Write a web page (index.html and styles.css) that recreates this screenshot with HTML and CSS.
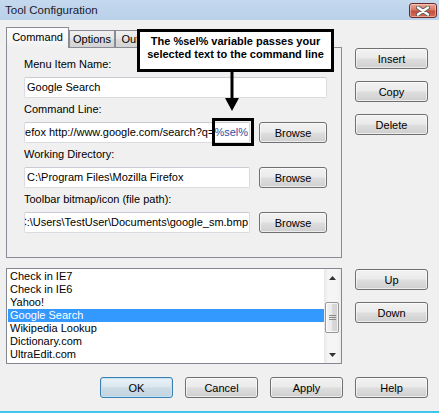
FILE: index.html
```html
<!DOCTYPE html>
<html lang="en">

<head>
    <meta charset="UTF-8">
    <meta name="viewport" content="width=device-width, initial-scale=1.0">
    <title>Tool Configuration</title>
    <link rel="stylesheet" href="styles.css">
</head>

<body>
    <div class="window">
        <!-- title bar -->
        <div class="titlebar">
            <span class="title">Tool Configuration</span>
            <button class="close-btn" aria-label="Close">
                <svg width="14" height="10" viewBox="0 0 14 10">
                    <path d="M2 1.5 L12 8.5 M12 1.5 L2 8.5" stroke="#5a5a5a" stroke-width="4.2" stroke-linecap="round"/>
                    <path d="M2 1.5 L12 8.5 M12 1.5 L2 8.5" stroke="#ffffff" stroke-width="2.4" stroke-linecap="round"/>
                </svg>
            </button>
        </div>

        <div class="client">
            <div class="top-row">
                <!-- tab control -->
                <div class="tabs">
                    <div class="tab-strip">
                        <div class="tab active">Command</div>
                        <div class="tab">Options</div>
                        <div class="tab">Output</div>
                    </div>
                    <div class="tab-page">
                        <div class="field">
                            <label>Menu Item Name:</label>
                            <div class="textbox full">Google Search</div>
                        </div>
                        <div class="field">
                            <label>Command Line:</label>
                            <div class="field-row">
                                <div class="textbox scrolled"><span>C:\Program Files\Mozilla Firefox\firefox http://www.google.com/search?q=<em class="var">%sel%</em></span></div>
                                <button class="btn browse">Browse</button>
                            </div>
                        </div>
                        <div class="field">
                            <label>Working Directory:</label>
                            <div class="field-row">
                                <div class="textbox">C:\Program Files\Mozilla Firefox</div>
                                <button class="btn browse">Browse</button>
                            </div>
                        </div>
                        <div class="field">
                            <label>Toolbar bitmap/icon (file path):</label>
                            <div class="field-row">
                                <div class="textbox scrolled"><span>C:\Users\TestUser\Documents\google_sm.bmp</span></div>
                                <button class="btn browse">Browse</button>
                            </div>
                        </div>
                    </div>
                </div>

                <div class="side-buttons first">
                    <button class="btn">Insert</button>
                    <button class="btn">Copy</button>
                    <button class="btn">Delete</button>
                </div>
            </div>

            <div class="list-row">
                <!-- tool list -->
                <div class="listbox">
                    <ul class="items">
                        <li>Check in IE7</li>
                        <li>Check in IE6</li>
                        <li>Yahoo!</li>
                        <li class="selected">Google Search</li>
                        <li>Wikipedia Lookup</li>
                        <li>Dictionary.com</li>
                        <li>UltraEdit.com</li>
                    </ul>
                    <div class="scrollbar">
                        <div class="sb-arrow">
                            <svg width="7" height="4" viewBox="0 0 7 4"><polygon points="0,4 7,4 3.5,0" fill="#333"/></svg>
                        </div>
                        <div class="sb-track">
                            <div class="sb-thumb">
                                <svg width="7" height="6" viewBox="0 0 7 6">
                                    <path d="M0 0.5 H7 M0 2.5 H7 M0 4.5 H7" stroke="#8a8a8a" stroke-width="1"/>
                                </svg>
                            </div>
                        </div>
                        <div class="sb-arrow">
                            <svg width="7" height="4" viewBox="0 0 7 4"><polygon points="0,0 7,0 3.5,4" fill="#333"/></svg>
                        </div>
                    </div>
                </div>

                <div class="side-buttons second">
                    <button class="btn">Up</button>
                    <button class="btn">Down</button>
                </div>
            </div>

            <div class="dialog-buttons">
                <button class="btn default">OK</button>
                <button class="btn">Cancel</button>
                <button class="btn">Apply</button>
                <button class="btn">Help</button>
            </div>
        </div>

        <!-- note laid over the dialog -->
        <div class="callout">The %sel% variable passes your<br>selected text to the command line</div>
        <svg class="callout-arrow" width="16" height="40" viewBox="0 0 16 40">
            <rect x="6.5" y="0" width="3" height="28" fill="#000"/>
            <polygon points="1,26 15,26 8,39" fill="#000"/>
        </svg>
        <div class="highlight"></div>
    </div>
</body>

</html>
```

FILE: styles.css
```css
* {
    box-sizing: border-box;
}

html,
body {
    height: 100%;
    margin: 0;
    background-color: #f0f0f0;
    font-family: "Liberation Sans", Arial, sans-serif;
    font-size: 11px;
    color: #000;
    overflow: hidden;
}

.window {
    position: relative;
    height: 413px;
    border-bottom: 2px solid #3fc6ea;
}

/* title bar */
.titlebar {
    height: 20px;
    display: flex;
    justify-content: space-between;
    align-items: flex-start;
    padding: 0 2px 0 5px;
    background: linear-gradient(#c5d8ee, #b9d1ea);
}

.title {
    font-size: 11.5px;
    line-height: 20px;
    color: #1c1a2a;
}

.close-btn {
    margin-top: 3px;
    width: 28px;
    height: 15px;
    padding: 0;
    border: 1px solid #6b2a2a;
    border-radius: 3px;
    background: linear-gradient(#e9a899, #d67a66 45%, #c44e3c 55%, #d0705a);
    box-shadow: inset 0 0 0 1px rgba(255, 220, 210, 0.5);
    display: flex;
    align-items: center;
    justify-content: center;
}

.client {
    padding: 7px 11px 0 6px;
}

.top-row,
.list-row {
    display: flex;
    gap: 13px;
}

/* tab control */
.tabs {
    width: 336px;
}

.tab-strip {
    display: flex;
    align-items: flex-end;
    height: 20px;
    position: relative;
    z-index: 1;
}

.tab {
    width: 46px;
    height: 17px;
    line-height: 16px;
    text-align: center;
    border: 1px solid #898c95;
    border-bottom: none;
    background: linear-gradient(#f0f0f0, #e6e6e6 50%, #dcdcdc 50%, #d4d4d4);
}

.tab.active {
    width: 63px;
    height: 21px;
    line-height: 19px;
    margin-bottom: -1px;
    background: linear-gradient(#fcfcfc, #f6f6f6 60%, #f0f0f0);
}

.tab-page {
    height: 211px;
    border: 1px solid #898c95;
    padding: 9px 14px 0 17px;
    display: flex;
    flex-direction: column;
    gap: 4px;
}

.field {
    display: flex;
    flex-direction: column;
}

.field label {
    line-height: 14px;
    margin-bottom: 6px;
}

.field-row {
    display: flex;
    gap: 9px;
}

.textbox {
    width: 226px;
    height: 21px;
    line-height: 19px;
    padding: 0 2px;
    background: #fff;
    border: 1px solid #dadce2;
    border-top-color: #c8cbd2;
    border-radius: 2px;
    white-space: nowrap;
    overflow: hidden;
}

.textbox.full {
    width: 303px;
}

/* long paths are scrolled to their end */
.textbox.scrolled {
    display: flex;
    justify-content: flex-end;
    padding-right: 1px;
}

.var {
    font-style: normal;
    color: #2d4fa6;
}

/* push buttons */
.btn {
    width: 73px;
    height: 21px;
    padding: 0;
    font: inherit;
    color: #000;
    border: 1px solid #707070;
    border-radius: 3px;
    background: linear-gradient(#f2f2f2, #ebebeb 45%, #dddddd 55%, #cfcfcf);
    box-shadow: inset 0 0 0 1px rgba(255, 255, 255, 0.6);
}

.btn.browse {
    width: 68px;
}

.btn.default {
    border-color: #3c7fb1;
    background: linear-gradient(#eaf2f7, #dbe7ef 45%, #cbdbe5 55%, #c3d4df);
    box-shadow: inset 0 0 0 1px #bfe4f8;
}

.side-buttons {
    display: flex;
    flex-direction: column;
    gap: 12px;
}

.side-buttons.first {
    padding-top: 21px;
}

.side-buttons.second {
    padding-top: 1px;
}

/* list box */
.list-row {
    margin-top: 10px;
}

.listbox {
    width: 336px;
    height: 96px;
    display: flex;
    background: #fff;
    border: 1px solid #828790;
}

.items {
    flex: 1;
    margin: 0;
    padding: 1px 0 0 1px;
    list-style: none;
}

.items li {
    height: 13px;
    line-height: 13px;
    padding-left: 2px;
    white-space: nowrap;
}

.items li.selected {
    background-color: #3399ff;
    color: #fff;
}

.scrollbar {
    width: 17px;
    display: flex;
    flex-direction: column;
    background: linear-gradient(90deg, #e8e8e8, #f5f5f5 25%, #f5f5f5 75%, #ededed);
}

.sb-arrow {
    height: 17px;
    display: flex;
    align-items: center;
    justify-content: center;
}

.sb-track {
    flex: 1;
}

.sb-thumb {
    height: 31px;
    margin: 16px 2px 0 1px;
    border: 1px solid #979797;
    border-radius: 2px;
    background: linear-gradient(90deg, #f4f4f4, #eaeaea 50%, #dadada 50%, #d2d2d2);
    box-shadow: inset 0 0 0 1px rgba(255, 255, 255, 0.7);
    display: flex;
    align-items: center;
    justify-content: center;
}

.dialog-buttons {
    margin-top: 13px;
    display: flex;
    justify-content: flex-end;
    gap: 12px;
}

/* annotation over the dialog */
.callout {
    position: absolute;
    left: 137px;
    top: 29px;
    width: 197px;
    height: 43px;
    padding-top: 3px;
    border: 3px solid #000;
    background: #fff;
    font-weight: bold;
    line-height: 13px;
    text-align: center;
    z-index: 2;
}

.callout-arrow {
    position: absolute;
    left: 224px;
    top: 72px;
    z-index: 2;
}

.highlight {
    position: absolute;
    left: 212px;
    top: 118px;
    width: 42px;
    height: 28px;
    border: 3px solid #000;
    z-index: 2;
}
```
